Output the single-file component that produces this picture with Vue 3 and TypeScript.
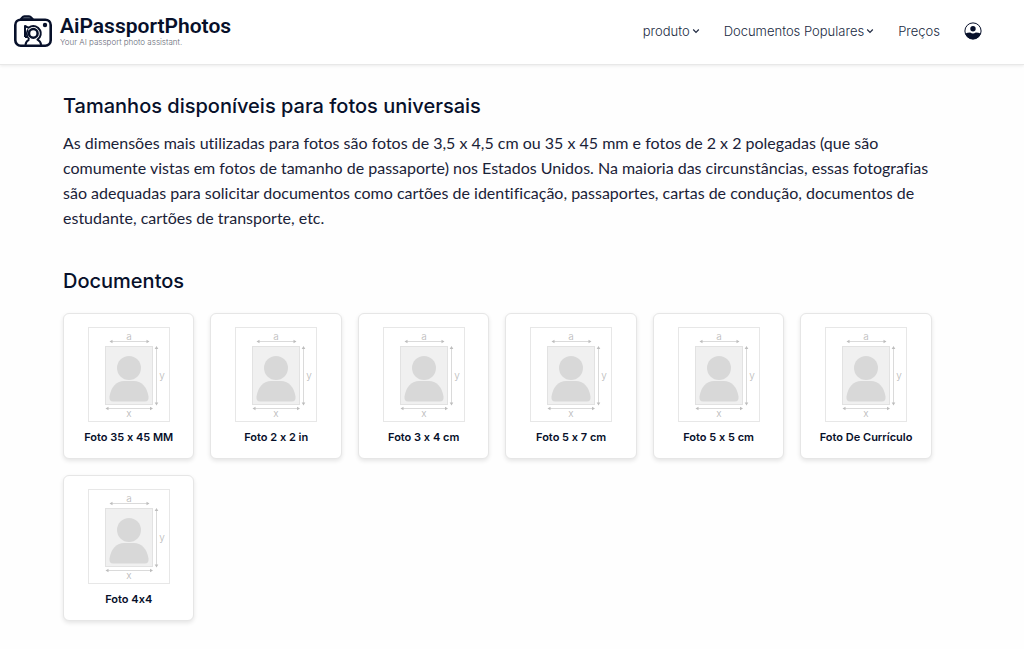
<script setup lang="ts">
interface DocumentType {
  id: string
  label: string
}

const documents: DocumentType[] = [
  { id: '35x45', label: 'Foto 35 x 45 MM' },
  { id: '2x2', label: 'Foto 2 x 2 in' },
  { id: '3x4', label: 'Foto 3 x 4 cm' },
  { id: '5x7', label: 'Foto 5 x 7 cm' },
  { id: '5x5', label: 'Foto 5 x 5 cm' },
  { id: 'curriculo', label: 'Foto De Currículo' },
  { id: '4x4', label: 'Foto 4x4' },
]
</script>

<template>
  <header class="header">
    <a class="brand" href="#">
      <svg class="brand-icon" viewBox="0 0 38 32" aria-hidden="true">
        <g fill="none" stroke="#07102a" stroke-linejoin="round">
          <path d="M6.5 4.5 L8.2 2.3 Q9 1.2 10.4 1.2 H15 Q16.4 1.2 17.2 2.3 L19 4.5 Z" fill="#5f6878" stroke-width="2" />
          <rect x="1.3" y="4.7" width="35.4" height="26" rx="5.4" stroke-width="2.6" />
          <path d="M11 22 V11 L14.6 12.8 Q19.3 9.4 24 12.8 Q28.6 17.4 25.6 22.4 L23.4 24.6 Q26.6 26 27.2 30 M15.2 24.6 Q12 26 11.4 30 M11 22 H13.2" stroke-width="2" />
          <path d="M14 14.4 Q11.8 18.4 13.4 21.8 L15.4 24.4" stroke-width="1.6" />
          <circle cx="19.3" cy="18.4" r="4.3" stroke-width="2.5" />
        </g>
        <circle cx="31" cy="10" r="2.2" fill="#07102a" />
      </svg>
      <span class="brand-text">
        <span class="brand-name">AiPassportPhotos</span>
        <span class="brand-tag">Your AI passport photo assistant.</span>
      </span>
    </a>
    <nav class="nav">
      <button class="nav-item" type="button" aria-haspopup="true">
        produto
        <svg class="chevron" viewBox="0 0 8 8" aria-hidden="true"><path d="M1.2 2.5 L4 5.3 L6.8 2.5" /></svg>
      </button>
      <button class="nav-item" type="button" aria-haspopup="true">
        Documentos Populares
        <svg class="chevron" viewBox="0 0 8 8" aria-hidden="true"><path d="M1.2 2.5 L4 5.3 L6.8 2.5" /></svg>
      </button>
      <a class="nav-item" href="#">Preços</a>
      <button class="account" type="button" aria-label="Conta">
        <svg viewBox="0 0 18 18" aria-hidden="true">
          <circle cx="9" cy="9" r="8.1" fill="#fff" stroke="#07102a" stroke-width="1" />
          <circle cx="9" cy="6.8" r="2.7" fill="#07102a" />
          <path d="M1.3 11.6 Q3.6 10.6 6.2 10.5 Q9 12.3 11.8 10.5 Q14.4 10.6 16.7 11.6 A8.1 8.1 0 0 1 1.3 11.6 Z" fill="#07102a" />
        </svg>
      </button>
    </nav>
  </header>

  <main class="content">
    <section>
      <h2 class="title">Tamanhos disponíveis para fotos universais</h2>
      <p class="intro">
        As dimensões mais utilizadas para fotos são fotos de 3,5 x 4,5 cm ou 35 x 45 mm e fotos de 2 x 2 polegadas (que são
        comumente vistas em fotos de tamanho de passaporte) nos Estados Unidos. Na maioria das circunstâncias, essas fotografias
        são adequadas para solicitar documentos como cartões de identificação, passaportes, cartas de condução, documentos de
        estudante, cartões de transporte, etc.
      </p>
    </section>
    <section class="documents">
      <h2 class="title">Documentos</h2>
      <div class="grid">
        <a v-for="doc in documents" :key="doc.id" class="card" href="#">
          <svg class="diagram" viewBox="0 0 82 95" aria-hidden="true">
            <rect x="0.5" y="0.5" width="81" height="94" fill="#fff" stroke="#e7e7e7" />
            <rect x="17.5" y="19.5" width="47" height="58" fill="#f0f0f0" stroke="#e2e2e2" />
            <circle cx="41" cy="41" r="12" fill="#d8d8d8" />
            <path d="M25 74.5 Q21 74.5 21.5 69.5 C23 59.5 29 54 36 54 H46 C53 54 59 59.5 60.5 69.5 Q61 74.5 57 74.5 Z" fill="#d8d8d8" />
            <path d="M24 14.5 H59 M20 81.5 H62 M68.5 22 V76" stroke="#dadada" fill="none" />
            <path d="M21.5 14.5 l3 -1.8 v3.6 z M61.5 14.5 l-3 -1.8 v3.6 z M17.5 81.5 l3 -1.8 v3.6 z M65 81.5 l-3 -1.8 v3.6 z M68.5 19 l-1.8 3 h3.6 z M68.5 78.5 l-1.8 -3 h3.6 z" fill="#bdbdbd" />
            <g class="axis">
              <text x="41" y="13">a</text>
              <text x="41" y="90">x</text>
              <text x="74" y="52">y</text>
            </g>
          </svg>
          <span class="card-label">{{ doc.label }}</span>
        </a>
      </div>
    </section>
  </main>
</template>

<style>
body {
  margin: 0;
  background: #fefefe;
}
</style>

<style scoped>
.header,
.content {
  font-family: Inter, "Open Sans", sans-serif;
  font-feature-settings: "calt" 0;
  color: #07102a;
}
.header {
  display: flex;
  align-items: center;
  justify-content: space-between;
  box-sizing: border-box;
  min-height: 65px;
  padding: 0 42px 2px 14px;
  background: #fff;
  border-bottom: 1px solid #e8e8e8;
  box-shadow: 0 1px 3px rgba(0, 0, 0, 0.08);
}
a {
  color: inherit;
  text-decoration: none;
}
button {
  padding: 0;
  border: 0;
  background: none;
  color: inherit;
  font: inherit;
  cursor: pointer;
}
.brand {
  display: flex;
  align-items: center;
  gap: 8px;
}
.brand-icon {
  width: 38px;
  height: 32px;
}
.brand-text {
  display: flex;
  flex-direction: column;
}
.brand-name {
  font-family: Roboto, sans-serif;
  font-size: 21px;
  line-height: 22px;
  font-weight: 600;
}
.brand-tag {
  font-size: 8px;
  line-height: 10px;
  font-weight: 300;
  color: #686c78;
}
.nav {
  display: flex;
  align-items: center;
  gap: 24px;
}
.nav-item {
  display: flex;
  align-items: center;
  gap: 2px;
  font-size: 13px;
  line-height: 20px;
  font-weight: 300;
  color: #202a42;
}
.chevron {
  width: 8px;
  height: 8px;
  fill: none;
  stroke: #202a42;
  stroke-width: 1.2;
}
.account,
.account svg {
  display: block;
  width: 18px;
  height: 18px;
}
.content {
  padding: 28px 9% 28px 63px;
}
.title {
  margin: 0;
  font-size: 20px;
  line-height: 26px;
  font-weight: 500;
}
.intro {
  margin: 11px 0 0;
  font-family: Lato, sans-serif;
  font-size: 16px;
  line-height: 25px;
  color: #1a2238;
  font-variant-ligatures: none;
}
.documents {
  margin-top: 38px;
}
.grid {
  display: grid;
  grid-template-columns: repeat(6, 1fr);
  gap: 16px;
  margin-top: 19px;
}
.card {
  display: flex;
  flex-direction: column;
  align-items: center;
  gap: 4px;
  padding: 13px 4px 10px;
  border: 1px solid #e6e6e6;
  border-radius: 6px;
  background: #fff;
  box-shadow: 0 2px 4px rgba(0, 0, 0, 0.1);
}
.diagram {
  width: 82px;
  height: 95px;
}
.axis {
  font-size: 10px;
  font-weight: 300;
  fill: #b8b8b8;
  text-anchor: middle;
}
.card-label {
  font-size: 11px;
  line-height: 22px;
  font-weight: 600;
  white-space: nowrap;
}
</style>
